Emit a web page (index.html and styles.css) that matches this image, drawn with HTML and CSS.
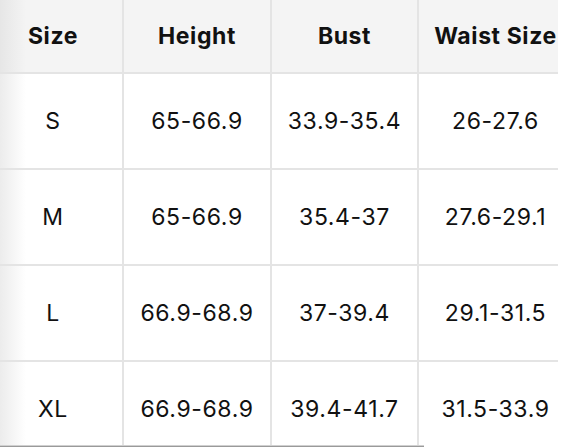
FILE: index.html
```html
<!DOCTYPE html>
<html>
<head>
<meta charset="utf-8">
<link rel="stylesheet" href="styles.css">
</head>
<body>
<div class="scroller">
  <div class="table">
    <div class="row head">
      <div class="cell c1">Size</div>
      <div class="cell c2">Height</div>
      <div class="cell c3">Bust</div>
      <div class="cell c4">Waist Size</div>
    </div>
    <div class="row">
      <div class="cell c1">S</div>
      <div class="cell c2">65-66.9</div>
      <div class="cell c3">33.9-35.4</div>
      <div class="cell c4">26-27.6</div>
    </div>
    <div class="row">
      <div class="cell c1">M</div>
      <div class="cell c2">65-66.9</div>
      <div class="cell c3">35.4-37</div>
      <div class="cell c4">27.6-29.1</div>
    </div>
    <div class="row">
      <div class="cell c1">L</div>
      <div class="cell c2">66.9-68.9</div>
      <div class="cell c3">37-39.4</div>
      <div class="cell c4">29.1-31.5</div>
    </div>
    <div class="row">
      <div class="cell c1">XL</div>
      <div class="cell c2">66.9-68.9</div>
      <div class="cell c3">39.4-41.7</div>
      <div class="cell c4">31.5-33.9</div>
    </div>
  </div>
  <div class="indicator"></div>
</div>
</body>
</html>
```
FILE: styles.css
```css
html, body {
  margin: 0;
  padding: 0;
  background: #ffffff;
}
body {
  font-family: "Inter", "Liberation Sans", sans-serif;
  color: #111111;
  width: 583px;
  height: 447px;
  overflow: hidden;
}
.scroller {
  position: relative;
  width: 583px;
  height: 447px;
  overflow: hidden;
}
.table {
  width: 558px;
  display: flex;
  flex-direction: column;
}
.row {
  display: flex;
  height: 96px;
}
.row.head {
  height: 74px;
  background: #f4f4f4;
}
.cell {
  box-sizing: border-box;
  display: flex;
  align-items: center;
  justify-content: center;
  border-bottom: 2px solid #e4e4e4;
  border-right: 2px solid #e4e4e4;
  font-size: 23px;
  font-weight: 400;
  letter-spacing: 0.6px;
}
.head .cell {
  font-weight: 700;
  letter-spacing: 0.6px;
}
.c1 {
  width: 124px;
  padding-right: 16px;
  background: linear-gradient(to right, #ececec, #ffffff 26px);
}
.head .c1 {
  background: linear-gradient(to right, #e6e6e6, #f4f4f4 26px);
}
.c2 { width: 148px; }
.c3 { width: 147px; }
.c4 {
  width: 139px;
  padding-left: 14px;
  border-right: none;
  white-space: nowrap;
}
.indicator {
  position: absolute;
  left: 0;
  top: 445px;
  width: 424px;
  height: 2px;
  background: linear-gradient(to bottom, #d0d0d0 50%, #9a9a9a 50%);
}
```
